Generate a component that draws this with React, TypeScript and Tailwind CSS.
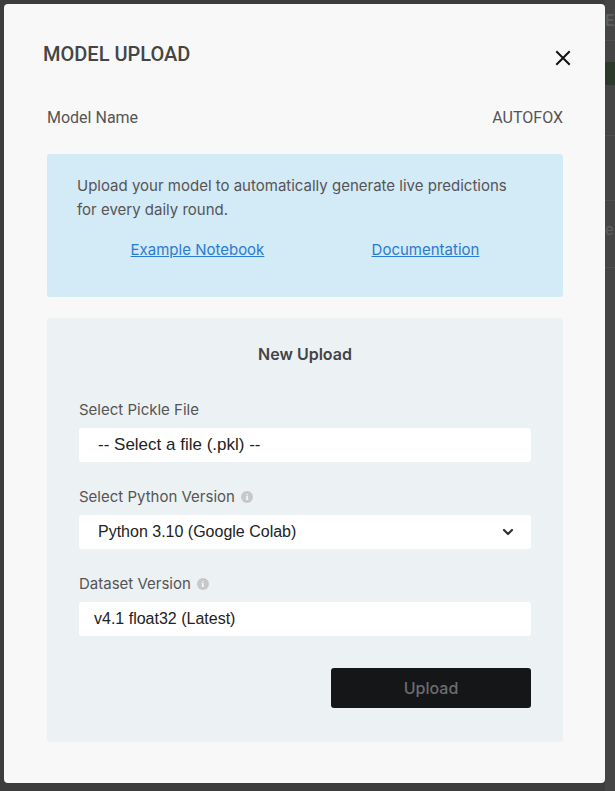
function InfoDot() {
  return (
    <span className="ml-[6px] inline-flex h-[12px] w-[12px] items-center justify-center rounded-full bg-[#c8c8c8] text-[9px] font-bold leading-none text-white [font-family:'Liberation_Serif',serif]">
      i
    </span>
  );
}

function CloseIcon() {
  return (
    <svg width="16" height="16" viewBox="0 0 16 16" fill="none" stroke="#111" strokeWidth="2" strokeLinecap="square">
      <path d="M2 2 L14 14 M14 2 L2 14" />
    </svg>
  );
}

function Chevron() {
  return (
    <svg width="12" height="8" viewBox="0 0 12 8" fill="none" stroke="#333" strokeWidth="2.2" strokeLinecap="round" strokeLinejoin="round">
      <path d="M2 2 L6 6 L10 2" />
    </svg>
  );
}

function Field({ label, info, children }: { label: string; info?: boolean; children: React.ReactNode }) {
  return (
    <div className="flex flex-col">
      <div className="mb-[6px] flex h-[24px] items-center text-[15px] text-[#555]">
        {label}
        {info && <InfoDot />}
      </div>
      {children}
    </div>
  );
}

export default function App() {
  return (
    <div className="flex h-[791px] w-[615px] overflow-hidden bg-[#3d3d3d] [font-family:Inter,'Noto_Sans',sans-serif]">
      {/* left gutter of the backdrop */}
      <div className="w-[4px] shrink-0" />

      {/* Modal */}
      <div className="mt-[4px] flex h-[779px] w-[601px] shrink-0 flex-col rounded-[4px] bg-[#f8f8f8] pl-[43px] pr-[42px] pt-[36px]">
        <div className="flex h-[28px] items-center justify-between">
          <h1 className="-ml-[4px] text-[20px] font-medium text-[#454545] [font-family:Roboto,sans-serif]">
            MODEL UPLOAD
          </h1>
          <button className="-mr-[8px] mt-[8px]">
            <CloseIcon />
          </button>
        </div>

        <div className="flex flex-col">
          <div className="mt-[38px] flex h-[24px] items-center justify-between text-[16px] text-[#555] [font-family:Roboto,sans-serif]">
            <span>Model Name</span>
            <span>AUTOFOX</span>
          </div>

          {/* Info box */}
          <div className="mt-[24px] h-[143px] rounded-[3px] bg-[#d3eaf7] px-[30px] pt-[20px]">
            <p className="max-w-[440px] text-[15px] leading-[24px] text-[#555]">
              Upload your model to automatically generate live predictions for every daily round.
            </p>
            <div className="mt-[16px] flex justify-around text-[15px] leading-[24px] text-[#2b7bd0]">
              <a href="#" className="underline">Example Notebook</a>
              <a href="#" className="underline">Documentation</a>
            </div>
          </div>

          {/* Upload form */}
          <div className="mt-[21px] flex h-[424px] flex-col rounded-[3px] bg-[#ecf1f4] px-[32px] pt-[24px]">
            <h2 className="h-[24px] text-center text-[16px] font-semibold leading-[24px] text-[#444]">New Upload</h2>

            <div className="mt-[32px] flex flex-col gap-[23px]">
              <Field label="Select Pickle File">
                <div className="flex h-[34px] items-center rounded-[3px] bg-white pl-[19px] text-[17px] text-[#222] [font-family:'Liberation_Sans',Arial,sans-serif]">
                  -- Select a file (.pkl) --
                </div>
              </Field>

              <Field label="Select Python Version" info>
                <div className="flex h-[34px] items-center justify-between rounded-[3px] bg-white pl-[19px] pr-[17px] text-[16px] text-[#222] [font-family:'Liberation_Sans',Arial,sans-serif]">
                  <span>Python 3.10 (Google Colab)</span>
                  <Chevron />
                </div>
              </Field>

              <Field label="Dataset Version" info>
                <div className="flex h-[34px] items-center rounded-[3px] bg-white pl-[15px] text-[16px] text-[#222] [font-family:'Liberation_Sans',Arial,sans-serif]">
                  v4.1 float32 (Latest)
                </div>
              </Field>
            </div>

            <div className="mt-[32px] flex justify-end">
              <button className="h-[40px] w-[200px] rounded-[3px] bg-[#151618] text-[16px] font-medium text-[#6d6d6d]">
                Upload
              </button>
            </div>
          </div>
        </div>
      </div>

      {/* page behind, peeking out on the right */}
      <div className="flex w-[10px] shrink-0 flex-col bg-[#454545]">
        <div className="h-[40px] overflow-hidden whitespace-nowrap pt-[8px] text-[16px] font-semibold text-[#5e5e5e]">ES</div>
        <div className="h-px bg-[#505050]" />
        <div className="mt-[21px] h-[23px] bg-[#2b3a2a]" />
        <div className="mt-[50px] h-px bg-[#505050]" />
        <div className="mt-[64px] h-px bg-[#505050]" />
        <div className="mt-[18px] h-[20px] overflow-hidden whitespace-nowrap text-[15px] text-[#5e5e5e]">e:</div>
        <div className="mt-[28px] h-px bg-[#505050]" />
      </div>
    </div>
  );
}
